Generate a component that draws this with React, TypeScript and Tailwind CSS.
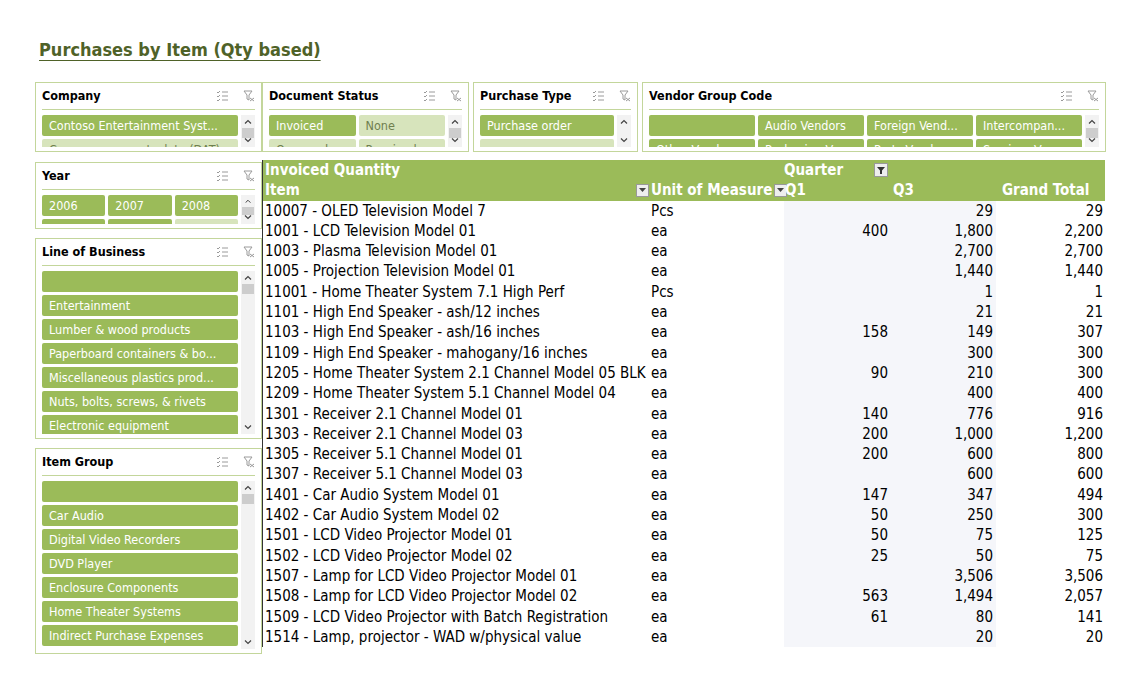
import React from 'react';

const G = '#9bbb59';

const Icons = () => (
  <div className="flex items-center gap-[14px] text-[#9a9a9a]">
    <svg width="13" height="12" viewBox="0 0 13 12" fill="none" stroke="currentColor" strokeWidth="1">
      <path d="M1 2l1 1 2-2M1 6l1 1 2-2M1 10l1 1 2-2M6 2h6M6 6h6M6 10h6" />
    </svg>
    <svg width="12" height="12" viewBox="0 0 12 12" fill="none" stroke="currentColor" strokeWidth="1">
      <path d="M1 1h8L6 5v5L4 9V5z" />
      <path d="M7 8l4 3M11 8l-4 3" />
    </svg>
  </div>
);

const Chev = ({ up }: { up?: boolean }) => (
  <svg width="8" height="5" viewBox="0 0 8 5" fill="none" stroke="#444" strokeWidth="1.2">
    <path d={up ? 'M1 4.5L4 1.5 7 4.5' : 'M1 0.5L4 3.5 7 0.5'} />
  </svg>
);

const Scroll = ({ thumb = true }: { thumb?: boolean }) => (
  <div className="flex w-[14px] flex-col items-center bg-[#f2f2f2] pb-[4px] pt-[4px]">
    <Chev up />
    {thumb && <div className="mt-[4px] h-[10px] w-[12px] bg-[#cdcdcd]" />}
    <div className="mt-auto"><Chev /></div>
  </div>
);

type Btn = { t: string; on?: boolean };

const Slicer = ({ title, rows, cols, h, w, long }: { title: string; rows: Btn[]; cols: number; h: number; w: number; long?: boolean }) => (
  <div className="flex flex-col border border-[#c3d69b] bg-white px-[6px] pt-[4px]" style={{ height: h, width: w }}>
    <div className="flex items-center justify-between border-b border-[#c3d69b] pb-[3px]">
      <span className="text-[12.5px] font-bold text-black">{title}</span>
      <Icons />
    </div>
    <div className="mt-[5px] flex min-h-0 flex-1 gap-[3px] overflow-hidden pb-[4px]">
      <div className="grid min-h-0 flex-1 content-start gap-[3px] overflow-hidden" style={{ gridTemplateColumns: `repeat(${cols}, minmax(0, 1fr))` }}>
        {rows.map((b, i) => (
          <div
            key={i}
            className={`h-[21px] shrink-0 truncate rounded-[2px] px-[7px] text-[12.5px] leading-[21px] ${b.on === false ? 'bg-[#d7e4bc] text-[#6f7f4f]' : 'bg-[#9bbb59] text-white'}`}
          >
            {b.t}
          </div>
        ))}
      </div>
      <Scroll thumb={long !== false} />
    </div>
  </div>
);

const data: [string, string, string, string, string][] = [
  ['10007 - OLED Television Model 7', 'Pcs', '', '29', '29'],
  ['1001 - LCD Television Model 01', 'ea', '400', '1,800', '2,200'],
  ['1003 - Plasma Television Model 01', 'ea', '', '2,700', '2,700'],
  ['1005 - Projection Television Model 01', 'ea', '', '1,440', '1,440'],
  ['11001 - Home Theater System 7.1 High Perf', 'Pcs', '', '1', '1'],
  ['1101 - High End Speaker - ash/12 inches', 'ea', '', '21', '21'],
  ['1103 - High End Speaker - ash/16 inches', 'ea', '158', '149', '307'],
  ['1109 - High End Speaker - mahogany/16 inches', 'ea', '', '300', '300'],
  ['1205 - Home Theater System 2.1 Channel Model 05 BLK', 'ea', '90', '210', '300'],
  ['1209 - Home Theater System 5.1 Channel Model 04', 'ea', '', '400', '400'],
  ['1301 - Receiver 2.1 Channel Model 01', 'ea', '140', '776', '916'],
  ['1303 - Receiver 2.1 Channel Model 03', 'ea', '200', '1,000', '1,200'],
  ['1305 - Receiver 5.1 Channel Model 01', 'ea', '200', '600', '800'],
  ['1307 - Receiver 5.1 Channel Model 03', 'ea', '', '600', '600'],
  ['1401 - Car Audio System Model 01', 'ea', '147', '347', '494'],
  ['1402 - Car Audio System Model 02', 'ea', '50', '250', '300'],
  ['1501 - LCD Video Projector Model 01', 'ea', '50', '75', '125'],
  ['1502 - LCD Video Projector Model 02', 'ea', '25', '50', '75'],
  ['1507 - Lamp for LCD Video Projector Model 01', 'ea', '', '3,506', '3,506'],
  ['1508 - Lamp for LCD Video Projector Model 02', 'ea', '563', '1,494', '2,057'],
  ['1509 - LCD Video Projector with Batch Registration', 'ea', '61', '80', '141'],
  ['1514 - Lamp, projector - WAD w/physical value', 'ea', '', '20', '20'],
];

const Drop = () => (
  <span className="ml-[2px] inline-flex h-[13px] w-[13px] shrink-0 items-center justify-center border border-[#999] bg-[#eee]">
    <svg width="7" height="4" viewBox="0 0 7 4"><path d="M0 0h7L3.5 4z" fill="#444" /></svg>
  </span>
);

const cols = 'grid grid-cols-[386px_135px_107px_105px_110px]';

export default function App() {
  return (
    <div className="h-[687px] w-[1140px] overflow-hidden bg-white pl-[35px] pt-[36px]" style={{ fontFamily: '"DejaVu Sans Condensed", "DejaVu Sans", sans-serif' }}>
      <h1 className="ml-[4px] text-[18px] font-bold text-[#4f6228] underline underline-offset-[4px]" style={{ fontFamily: '"DejaVu Sans Condensed", "DejaVu Sans", sans-serif' }}>
        Purchases by Item (Qty based)
      </h1>
      <div className="mt-[19px] flex items-start">
        <Slicer title="Company" w={227} h={70} cols={1} rows={[{ t: 'Contoso Entertainment Syst...' }, { t: 'Company accounts data (DAT)', on: false }]} />
        <Slicer title="Document Status" w={207} h={70} cols={2} rows={[{ t: 'Invoiced' }, { t: 'None', on: false }, { t: 'Open order', on: false }, { t: 'Received', on: false }]} />
        <div className="w-[4px]" />
        <Slicer title="Purchase Type" w={165} h={70} cols={1} long={false} rows={[{ t: 'Purchase order' }, { t: '', on: false }]} />
        <div className="w-[4px]" />
        <Slicer title="Vendor Group Code" w={464} h={70} cols={4} rows={[{ t: '' }, { t: 'Audio Vendors' }, { t: 'Foreign Vend...' }, { t: 'Intercompan...' }, { t: 'Other Vendors' }, { t: 'Packaging Ve...' }, { t: 'Parts Vendors' }, { t: 'Services Ven...' }]} />
      </div>
      <div className="flex items-start">
        <div className="flex w-[227px] flex-col gap-[9px] pt-[10px]">
          <Slicer title="Year" w={227} h={67} cols={3} rows={[{ t: '2006' }, { t: '2007' }, { t: '2008' }, { t: '' }, { t: '' }, { t: '', on: false }]} />
          <Slicer title="Line of Business" w={227} h={201} cols={1} rows={['', 'Entertainment', 'Lumber & wood products', 'Paperboard containers & bo...', 'Miscellaneous plastics prod...', 'Nuts, bolts, screws, & rivets', 'Electronic equipment'].map(t => ({ t }))} />
          <Slicer title="Item Group" w={227} h={206} cols={1} rows={['', 'Car Audio', 'Digital Video Recorders', 'DVD Player', 'Enclosure Components', 'Home Theater Systems', 'Indirect Purchase Expenses', 'Other'].map(t => ({ t }))} />
        </div>
        <div className="mt-[8px] w-[843px] border-l border-[#333] text-[15px] leading-[20.3px] text-black" style={{ fontFamily: '"DejaVu Sans Condensed", "DejaVu Sans", sans-serif' }}>
          <div className={`${cols} whitespace-nowrap font-bold text-white`} style={{ background: G }}>
            <div className="pl-[2px]">Invoiced Quantity</div>
            <div />
            <div className="col-span-3 flex items-center">
              <span className="w-[90px]">Quarter</span>
              <span className="inline-flex h-[14px] w-[14px] items-center justify-center border border-[#999] bg-[#eee]">
                <svg width="8" height="7" viewBox="0 0 8 7"><path d="M0 0h8L5 3.5V7H3V3.5z" fill="#333" /></svg>
              </span>
            </div>
            <div className="flex items-center justify-between pl-[2px]">Item<Drop /></div>
            <div className="flex items-center pl-[2px]">Unit of Measure<Drop /></div>
            <div className="pl-[1px]">Q1</div>
            <div className="pl-[2px]">Q3</div>
            <div className="pl-[6px]">Grand Total</div>
          </div>
          {data.map((r, i) => (
            <div key={i} className={cols}>
              <div className="overflow-hidden whitespace-nowrap pl-[2px]">{r[0]}</div>
              <div className="pl-[2px]">{r[1]}</div>
              <div className="bg-[#f5f6fa] pr-[3px] text-right">{r[2]}</div>
              <div className="bg-[#f5f6fa] pr-[3px] text-right">{r[3]}</div>
              <div className="pr-[3px] text-right">{r[4]}</div>
            </div>
          ))}
        </div>
      </div>
    </div>
  );
}
